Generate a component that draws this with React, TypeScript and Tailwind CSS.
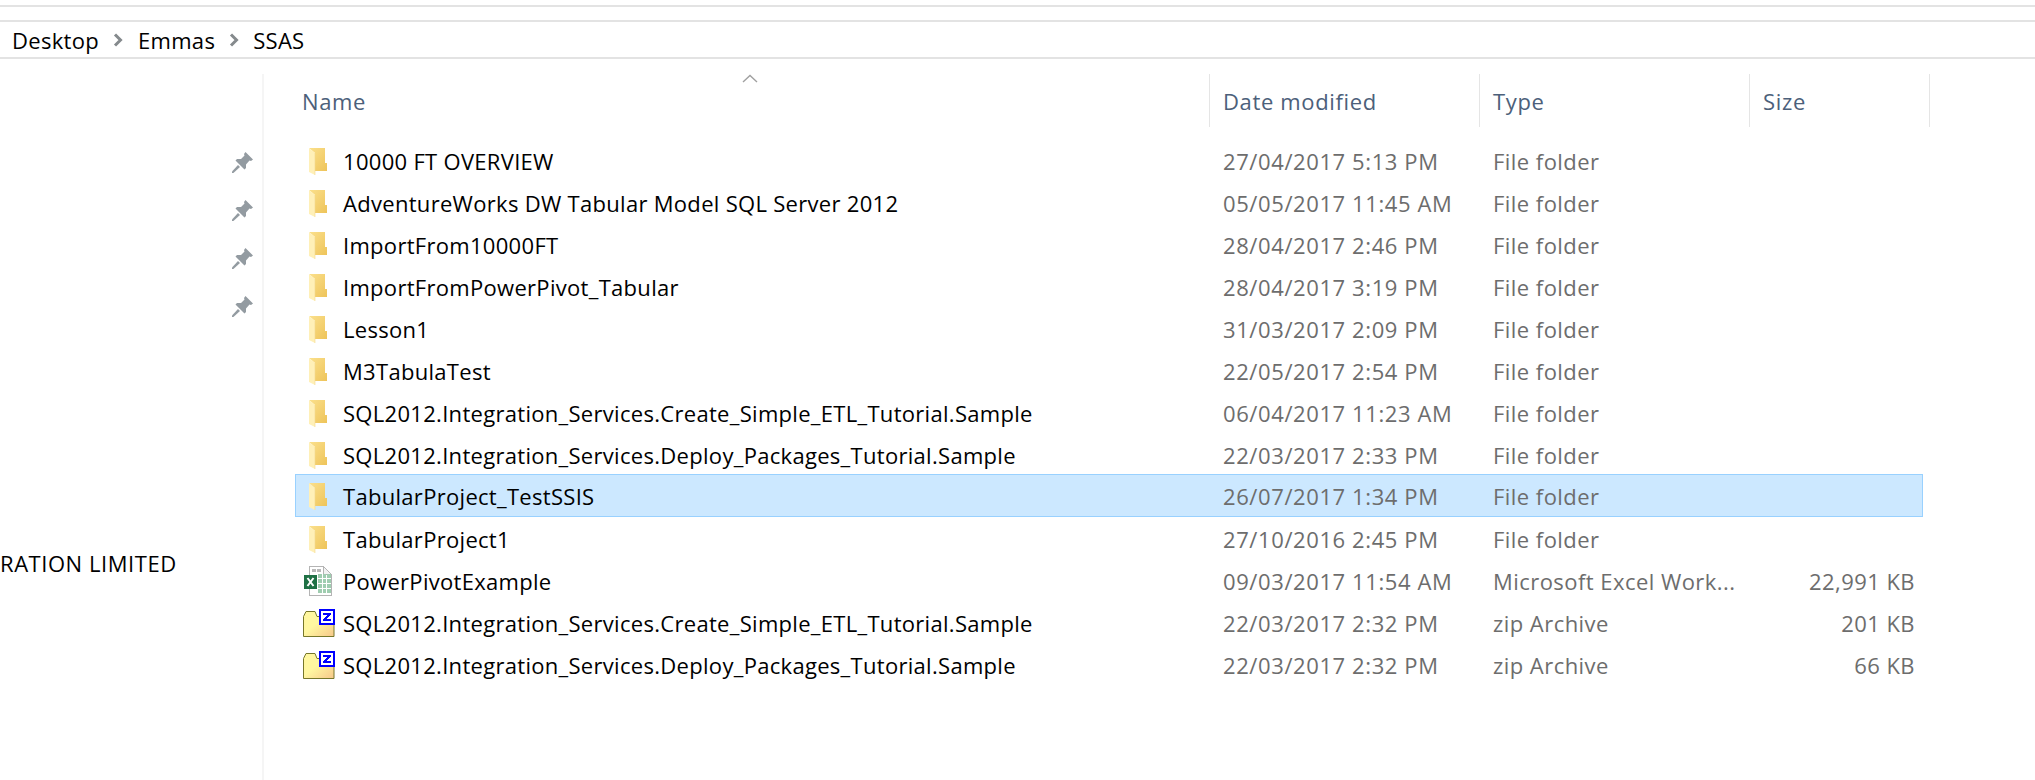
const rows = [
  { n: "10000 FT OVERVIEW", d: "27/04/2017 5:13 PM", t: "File folder", s: "", i: "f" },
  { n: "AdventureWorks DW Tabular Model SQL Server 2012", d: "05/05/2017 11:45 AM", t: "File folder", s: "", i: "f" },
  { n: "ImportFrom10000FT", d: "28/04/2017 2:46 PM", t: "File folder", s: "", i: "f" },
  { n: "ImportFromPowerPivot_Tabular", d: "28/04/2017 3:19 PM", t: "File folder", s: "", i: "f" },
  { n: "Lesson1", d: "31/03/2017 2:09 PM", t: "File folder", s: "", i: "f" },
  { n: "M3TabulaTest", d: "22/05/2017 2:54 PM", t: "File folder", s: "", i: "f" },
  { n: "SQL2012.Integration_Services.Create_Simple_ETL_Tutorial.Sample", d: "06/04/2017 11:23 AM", t: "File folder", s: "", i: "f" },
  { n: "SQL2012.Integration_Services.Deploy_Packages_Tutorial.Sample", d: "22/03/2017 2:33 PM", t: "File folder", s: "", i: "f" },
  { n: "TabularProject_TestSSIS", d: "26/07/2017 1:34 PM", t: "File folder", s: "", i: "f", sel: true },
  { n: "TabularProject1", d: "27/10/2016 2:45 PM", t: "File folder", s: "", i: "f" },
  { n: "PowerPivotExample", d: "09/03/2017 11:54 AM", t: "Microsoft Excel Work...", s: "22,991 KB", i: "x" },
  { n: "SQL2012.Integration_Services.Create_Simple_ETL_Tutorial.Sample", d: "22/03/2017 2:32 PM", t: "zip Archive", s: "201 KB", i: "z" },
  { n: "SQL2012.Integration_Services.Deploy_Packages_Tutorial.Sample", d: "22/03/2017 2:32 PM", t: "zip Archive", s: "66 KB", i: "z" },
];

function Folder() {
  return (
    <svg width="18" height="27" viewBox="0 0 18 27">
      <defs>
        <linearGradient id="fb" x1="0" y1="0" x2="1" y2="1">
          <stop offset="0" stopColor="#fbe08c" />
          <stop offset="1" stopColor="#eec45a" />
        </linearGradient>
      </defs>
      <path d="M0 0H16V15H18V23H6V5L0 0Z" fill="url(#fb)" />
      <path d="M0 0L6 5V27L0 24Z" fill="#fff0b8" />
      <path d="M6 5V27" stroke="#f3d98e" strokeWidth="0.6" />
    </svg>
  );
}

function Excel() {
  return (
    <svg width="28" height="30" viewBox="0 0 28 30" shapeRendering="crispEdges">
      <path d="M5.5 .5H19L27 8V29.5H5.5Z" fill="#fff" stroke="#b4b4b4" />
      <path d="M19 .5V8H27" fill="#f2f2f2" stroke="#b4b4b4" />
      <rect x="8" y="3" width="4" height="3" fill="#b9b9b9" />
      <rect x="13" y="3" width="4" height="3" fill="#b9b9b9" />
      {[8, 13, 18, 23].map((y) =>
        [14, 18.5, 23].map((x) => <rect key={`${x}-${y}`} x={x} y={y} width="3.5" height="4" fill="#9fcdb0" />),
      )}
      <rect x="0" y="9" width="13" height="14" fill="#1f7145" />
      <path d="M3.5 12L9.5 20M9.5 12L3.5 20" stroke="#fff" strokeWidth="2" fill="none" shapeRendering="auto" />
    </svg>
  );
}

function Zip() {
  return (
    <svg className="ml-[2px]" width="32" height="28" viewBox="0 0 32 28" shapeRendering="crispEdges">
      <defs>
        <linearGradient id="zb" x1="0" y1="0" x2="1" y2="1">
          <stop offset="0.45" stopColor="#fff7a0" />
          <stop offset="1" stopColor="#f6c78a" />
        </linearGradient>
      </defs>
      <path d="M.5 7.5L3 2.5H12L14 7.5H31V27.5H.5Z" fill="url(#zb)" stroke="#77772a" shapeRendering="auto" />
      <rect x="17" y="1" width="14" height="14" fill="#fff" stroke="#0000ff" strokeWidth="2" />
      <path d="M20 4H28V6L23.5 10H28V12H20V10L24.5 6H20Z" fill="#0000ff" />
    </svg>
  );
}

function Pin() {
  return (
    <svg width="21" height="21" viewBox="0 0 21 21">
      <g fill="#939ba1">
        <path d="M13.5 0L21 7.5L19 9L17.5 8.5L14 12.5L14 16L12.5 17.5L3.5 8.5L5 7L9 7L12.5 3.5L12 2Z" />
        <path d="M0 19.6L6 13L8 15L1.4 21H0Z" />
      </g>
    </svg>
  );
}

function Chevron() {
  return (
    <svg width="10" height="14" viewBox="0 0 10 14">
      <path d="M2 1.5L7.5 7L2 12.5" fill="none" stroke="#858a8d" strokeWidth="3" />
    </svg>
  );
}

function Header({ label, w }: { label: string; w: string }) {
  return (
    <div className={`${w} shrink-0 h-[53px] border-r border-[#e5e5e5] flex items-center text-[#4c607a] tracking-[0.65px]`}>{label}</div>
  );
}

export default function App() {
  return (
    <div className="w-[2035px] h-[780px] bg-white overflow-hidden text-[22px] leading-[30px] flex flex-col" style={{ fontFamily: '"Open Sans", "Noto Sans", sans-serif' }}>
      <div className="h-[7px] border-b-2 border-[#e3e3e3]" />
      <div className="h-[15px] border-b-2 border-[#e3e3e3]" />
      <div className="h-[37px] border-b-2 border-[#e3e3e3] flex items-center pl-[12px] text-black tracking-[0.3px]">
        <span>Desktop</span>
        <span className="ml-[14px] mr-[15px] flex"><Chevron /></span>
        <span>Emmas</span>
        <span className="ml-[14px] mr-[14px] flex"><Chevron /></span>
        <span>SSAS</span>
      </div>
      <div className="flex flex-1 min-h-0">
        <div className="w-[264px] shrink-0 mt-[15px] border-r-2 border-[#f5f5f5] text-black whitespace-nowrap">
          <div className="flex flex-col items-end gap-[27px] pr-[9px] pt-[78px]">
            <Pin /><Pin /><Pin /><Pin />
          </div>
          <div className="mt-[231px] tracking-[0.55px]">RATION LIMITED</div>
        </div>
        <div className="flex-1 pl-[31px] pt-[15px] flex flex-col relative">
          <svg className="absolute left-[478px] top-[15px]" width="16" height="9" viewBox="0 0 16 9">
            <path d="M1 8L8 1.5L15 8" fill="none" stroke="#a0a0a0" strokeWidth="1.4" />
          </svg>
          <div className="flex">
            <Header label="Name" w="w-[915px] pl-[7px]" />
            <Header label="Date modified" w="w-[270px] pl-[13px]" />
            <Header label="Type" w="w-[270px] pl-[13px]" />
            <Header label="Size" w="w-[180px] pl-[13px]" />
          </div>
          <div className="mt-[13px] flex flex-col w-[1628px]">
            {rows.map((r, i) => (
              <div key={i} className={`flex items-center border ${r.sel ? "h-[43px] -mt-[2px] mb-[1px] pt-[1px] bg-[#cce8ff] border-[#99d1ff]" : "h-[42px] border-transparent"}`}>
                <div className="w-[914px] flex items-center shrink-0 text-black tracking-[0.3px]">
                  <div className="w-[47px] flex justify-center shrink-0 pr-[3px]">
                    {r.i === "f" ? <Folder /> : r.i === "x" ? <Excel /> : <Zip />}
                  </div>
                  <span className="whitespace-nowrap">{r.n}</span>
                </div>
                <div className="w-[270px] pl-[13px] shrink-0 text-[#6d6d6d] whitespace-nowrap tracking-[0.6px]">{r.d}</div>
                <div className="w-[270px] pl-[13px] shrink-0 text-[#6d6d6d] whitespace-nowrap tracking-[0.45px]">{r.t}</div>
                <div className="w-[165px] text-right shrink-0 text-[#6d6d6d] whitespace-nowrap tracking-[0.45px]">{r.s}</div>
              </div>
            ))}
          </div>
        </div>
      </div>
    </div>
  );
}
